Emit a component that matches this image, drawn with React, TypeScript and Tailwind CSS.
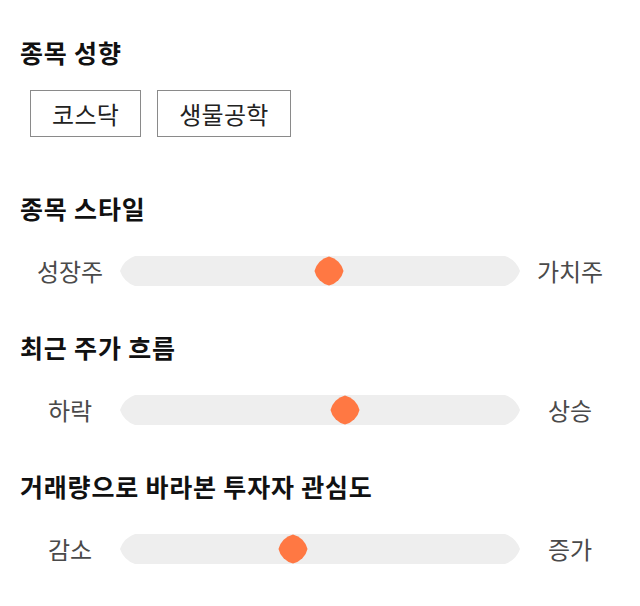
import { useState } from 'react';

const FONT = '"Noto Sans CJK KR", "Noto Sans", sans-serif';

const SLIDERS = [
  { title: '종목 스타일', left: '성장주', right: '가치주', value: 194 },
  { title: '최근 주가 흐름', left: '하락', right: '상승', value: 210 },
  { title: '거래량으로 바라본 투자자 관심도', left: '감소', right: '증가', value: 158 },
];

function Thumb({ x }: { x: number }) {
  return (
    <svg
      width={30}
      height={30}
      viewBox="0 0 30 30"
      className="absolute top-0"
      style={{ left: x }}
    >
      <path
        d="M15 0.5A19 19 0 0 1 29.5 15A19 19 0 0 1 15 29.5A19 19 0 0 1 0.5 15A19 19 0 0 1 15 0.5Z"
        fill="#ff7843"
      />
    </svg>
  );
}

function Slider({ left, right, value }: { left: string; right: string; value: number }) {
  return (
    <div className="flex items-center h-[30px]">
      <div className="w-[100px] text-center text-[24px] text-[#4a4a4a] leading-none">{left}</div>
      <div className="relative w-[400px] h-[30px]">
        <div className="h-full w-full bg-[#eeeeee] [clip-path:path('M15_0H385A24_24_0_0_1_400_15A24_24_0_0_1_385_30H15A24_24_0_0_1_0_15A24_24_0_0_1_15_0Z')]" />
        <Thumb x={value} />
      </div>
      <div className="w-[100px] text-center text-[24px] text-[#4a4a4a] leading-none">{right}</div>
    </div>
  );
}

export default function App() {
  const [tags] = useState(['코스닥', '생물공학']);

  return (
    <div className="w-[640px] h-[606px] bg-white px-5 pt-9" style={{ fontFamily: FONT }}>
      <h2 className="text-[25px] font-bold leading-8 text-[#111] tracking-[0.8px]">종목 성향</h2>
      <div className="flex gap-4 ml-[10px] mt-[22px]">
        {tags.map((t) => (
          <div
            key={t}
            className="h-[47px] px-[21px] flex items-center border border-[#8a8a8a] text-[24px] text-[#222] tracking-[0.3px]"
          >
            {t}
          </div>
        ))}
      </div>

      {SLIDERS.map((s, i) => (
        <div key={s.title} className={i === 0 ? 'mt-[55px]' : 'mt-[45px]'}>
          <h2 className="text-[25px] font-bold leading-8 text-[#111] tracking-[0.8px]">{s.title}</h2>
          <div className="mt-8">
            <Slider left={s.left} right={s.right} value={s.value} />
          </div>
        </div>
      ))}
    </div>
  );
}
